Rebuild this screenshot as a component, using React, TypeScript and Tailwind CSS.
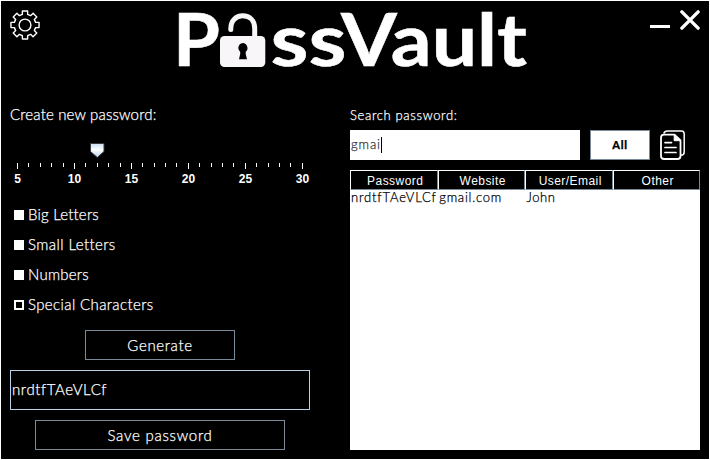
import type { ReactNode } from 'react';

const ticks = Array.from({ length: 26 }, (_, i) => i + 5);

const options = [
  { label: 'Big Letters', on: true, track: 'tracking-[0.2px]' },
  { label: 'Small Letters', on: true, track: 'tracking-[0.42px]' },
  { label: 'Numbers', on: true, track: 'tracking-[0.25px]' },
  { label: 'Special Characters', on: false, track: 'tracking-[0.38px]' },
];

function Gear() {
  const teeth = [0, 45, 90, 135, 180, 225, 270, 315];
  const pts: string[] = [];
  const at = (r: number, deg: number) => {
    const a = (deg * Math.PI) / 180;
    return `${(15 + r * Math.sin(a)).toFixed(2)} ${(15 - r * Math.cos(a)).toFixed(2)}`;
  };
  teeth.forEach((t) => {
    pts.push(at(10.9, t - 14), at(14.3, t - 10.5), at(14.3, t + 10.5), at(10.9, t + 14));
  });
  return (
    <svg className="h-[30px] w-[30px]" viewBox="0 0 30 30" fill="none" stroke="white" strokeWidth="1.4" strokeLinejoin="round">
      <path d={`M${pts.join('L')}Z`} />
      <circle cx="15" cy="15" r="5.9" />
    </svg>
  );
}

function Logo() {
  return (
    <svg className="h-[98px] w-[370px] overflow-visible" viewBox="165 1 370 98" fill="white">
      <g fontFamily="Lato, sans-serif" fontWeight="700" fontSize="72.5" stroke="white" strokeWidth=".5">
        <text x="173" y="65.5" textLength="47" lengthAdjust="spacingAndGlyphs">P</text>
        <text x="270.500" y="65.5" textLength="76" lengthAdjust="spacingAndGlyphs">ss</text>
        <text x="341" y="65.5" textLength="186" lengthAdjust="spacingAndGlyphs">Vault</text>
      </g>
      <g fill="#f8f6f8">
        <rect x="220" y="36" width="45.300" height="31" rx="4.500" />
        <path d="M230.800 29.500V28.500C230.800 20.500 236 15.800 242.700 15.800C249.700 15.800 254.700 20.500 254.700 28.500V38" fill="none" stroke="#f8f6f8" strokeWidth="5" strokeLinecap="round" />
      </g>
      <path d="M242.700 43a5 5 0 0 1 3 8.800v2.200l1.300 5.200h-8l1.200-5.200v-2.200a5 5 0 0 1 2.500-8.800Z" fill="black" />
    </svg>
  );
}

function CopyIcon() {
  return (
    <svg className="h-[30px] w-[26px]" viewBox="0 0 26 30" fill="none" stroke="white" strokeLinecap="round" strokeLinejoin="round">
      <path d="M4 3Q4.500 .900 7.500 .900H21.500Q24.200 .900 24.200 4V22Q24.200 25 21.500 25.200" strokeWidth="1.500" />
      <path d="M4 4.700H14.500L20.500 10.500V26Q20.500 29 17.500 29H4Q1 29 1 26V7.700Q1 4.700 4 4.700Z" strokeWidth="1.800" />
      <path d="M14.200 4.700V10.700H20.500Z" fill="white" strokeWidth="1" />
      <path d="M5 12.600H11.500M5 17.500H16M5 22.500H16" strokeWidth="1.700" />
    </svg>
  );
}

function Tick({ n }: { n: number }) {
  return <span className={n % 5 === 0 ? 'h-1.5 w-px bg-white' : 'h-1 w-px bg-white'} />;
}

function HeadCell({ children }: { children: ReactNode }) {
  return (
    <div className="flex h-5 items-center justify-center border border-t-white border-r-[#7a8a99] border-b-[#7a8a99] border-l-white bg-black pt-0.5 pl-[3px] font-['Liberation_Sans',sans-serif] text-[12px] tracking-[0.45px] text-white [-webkit-text-stroke:0px]">
      {children}
    </div>
  );
}

export default function App() {
  return (
    <div className="h-[460px] w-[710px] overflow-hidden border border-white bg-black font-[Lato,sans-serif] text-[15px] font-light whitespace-nowrap text-white [-webkit-text-stroke:0.25px]">
      <header className="flex h-[99px] items-start">
        <button className="mt-[9px] ml-[9px]"><Gear /></button>
        <div className="ml-[125px]"><Logo /></div>
        <span className="mt-6 ml-[115px] h-[3px] w-5 bg-white" />
        <svg className="mt-[9px] ml-[10px] h-5 w-5" viewBox="0 0 20 20" stroke="white" strokeWidth="3.4" strokeLinecap="round">
          <path d="M1.900 1.900L18.100 18.100M18.100 1.900L1.900 18.100" />
        </svg>
      </header>

      <main className="flex">
        <section className="ml-[9px] w-[300px] shrink-0">
          <div className="h-[42px] pt-1 leading-5 tracking-[0.17px]">Create new password:</div>
          <div className="h-[57px]">
            <svg className="ml-[80px] h-[16px] w-[15px]" viewBox="0 0 15 16">
              <defs>
                <linearGradient id="thumb" x1="0" y1="0" x2="0" y2="1">
                  <stop offset="0" stopColor="#c8ddf2" />
                  <stop offset=".45" stopColor="#ffffff" />
                  <stop offset="1" stopColor="#b8cfe5" />
                </linearGradient>
              </defs>
              <path d="M.5 1.500H14V9.500L7.300 15.500L.5 9.500Z" fill="url(#thumb)" stroke="#333b44" />
            </svg>
            <div className="mt-[5px] ml-[7px] flex h-1.5 w-[286px] items-start justify-between">
              {ticks.map((n) => <Tick key={n} n={n} />)}
            </div>
            <div className="mt-[2px] -ml-[21px] grid w-[342px] grid-cols-6 text-center font-['Liberation_Sans',sans-serif] text-[12px] leading-4 font-bold [-webkit-text-stroke:0px]">
              {[5, 10, 15, 20, 25, 30].map((n) => <span key={n}>{n}</span>)}
            </div>
          </div>
          <div className="mt-px ml-1 flex flex-col">
            {options.map((o) => (
              <label key={o.label} className="flex h-[30px] items-center gap-1">
                <span className={o.on ? 'size-2.5 bg-white' : 'size-2.5 border-2 border-white'} />
                <span className={`pb-0.5 ${o.track}`}>{o.label}</span>
              </label>
            ))}
          </div>
          <div className="mt-[10px] flex flex-col items-center gap-[10px]">
            <button className="h-[30px] w-[150px] border border-[#7a8a99] tracking-[0.65px]">Generate</button>
            <div className="flex h-10 w-full items-center border border-[#b8cfe5] pb-px pl-px tracking-[0.62px]">nrdtfTAeVLCf</div>
            <button className="h-[30px] w-[250px] border border-[#7a8a99] tracking-[0.75px]">Save password</button>
          </div>
        </section>

        <section className="ml-10 w-[350px] shrink-0 text-[13px]">
          <div className="h-[30px] pt-[5px] leading-5 tracking-[0.65px]">Search password:</div>
          <div className="flex h-[30px] items-center">
            <div className="flex h-[30px] w-[230px] items-center bg-white pl-px text-[#333]">
              <span className="tracking-[0.9px]">gmai</span>
              <span className="h-4 w-px bg-black" />
            </div>
            <button className="ml-[10px] h-[30px] w-[60px] border border-[#7a8a99] bg-white text-[11px] font-black tracking-[0.8px] text-black">All</button>
            <button className="ml-[10px]"><CopyIcon /></button>
          </div>
          <div className="mt-[10px] h-[280px] bg-white">
            <div className="grid grid-cols-4">
              <HeadCell>Password</HeadCell>
              <HeadCell>Website</HeadCell>
              <HeadCell>User/Email</HeadCell>
              <HeadCell>Other</HeadCell>
            </div>
            <div className="grid grid-cols-4 pl-px leading-[15px] text-black">
              <span className="tracking-[0.82px]">nrdtfTAeVLCf</span>
              <span className="pl-px tracking-[0.75px]">gmail.com</span>
              <span className="pl-px tracking-[0.6px]">John</span>
            </div>
          </div>
        </section>
      </main>
    </div>
  );
}
